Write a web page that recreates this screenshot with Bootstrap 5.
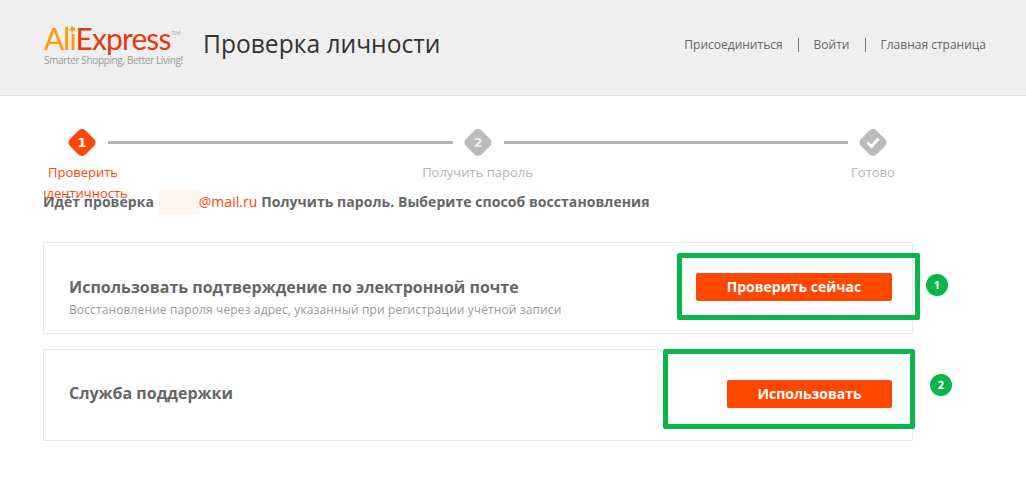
<!DOCTYPE html>
<html lang="ru">
<head>
<meta charset="utf-8">
<title>Проверка личности</title>
<link href="https://cdn.jsdelivr.net/npm/bootstrap@5.3.0/dist/css/bootstrap.min.css" rel="stylesheet">
<style>
html,body{height:496px;overflow:hidden}
body{position:relative;background:#fff;font-family:"Open Sans","Liberation Sans",sans-serif;color:#666;font-size:14px}
.top-bar{height:96px;background:#efefef;border-bottom:1px solid #e0e0e0;padding:22px 40px 0 44px}
.brand-box{width:140px;margin:-5px 19px 0 0;position:relative}
.brand-name{font-size:30px;line-height:32px;letter-spacing:-.9px;white-space:nowrap;color:#e8380d;font-family:Lato,"Open Sans",sans-serif}
.brand-ali{color:#ff9a00}
.brand-tm{font-size:6px;vertical-align:15px;color:#c9a090;letter-spacing:0;margin-left:1px}
.brand-star{position:absolute;left:24px;top:8px;display:block}
.brand-tag{font-size:10px;line-height:12px;color:#9a9a9a;white-space:nowrap;letter-spacing:-.36px;font-family:"Open Sans",sans-serif}
.page-title{font-size:24.6px;font-weight:400;color:#333;line-height:44px;margin:0}
.top-links{margin-top:16px;font-size:12px;color:#666}
.top-links span{display:block;line-height:14px}
.top-links .sep{border-left:1px solid #777;padding-left:15px;margin-left:15px}
.content-area{padding:32px 0 0 44px;width:913px}
.step-grid{display:grid;grid-template-columns:76px 1fr 76px 1fr 76px;width:867px;height:61px;overflow-x:clip;overflow-y:visible;align-content:start}
.gem{justify-self:center;display:block}
.rail{height:3px;background:#b3b3b3;margin:13px -13px 0 -12px}
.step-label{grid-row:2;justify-self:center;width:120px;text-align:center;line-height:21px;margin-top:5px;color:#b5b5b5;font-size:13px}
.step-label.on{color:#ff4700;grid-column:1;margin-left:2px}
.verify-line{font-weight:700;font-size:14px;line-height:25px;color:#666;margin:0 0 28px -1px;position:relative;white-space:nowrap;letter-spacing:.06px}
.hidden-mail{display:inline-block;width:41px;height:25px;background:#fff5ef;vertical-align:top;margin:0 -1px 0 1px}
.mail-end{color:#ff4700;font-weight:400;position:relative}
.way-box{width:870px;height:92px;border:1px solid #e8e8e8;margin:0 0 15px -1px;padding:0 20px 0 25px}
.way-title{font-size:16px;font-weight:700;color:#666;line-height:24px}
.way-text{margin-top:18px}
.way-sub{font-size:12px;line-height:18px;color:#999;margin-top:2px;letter-spacing:.12px}
.way-solo{margin-bottom:4px}
.way-btn{background:#ff4700;border:0;border-radius:2px;height:28px;color:#fff;font-weight:700;font-size:14px;padding:0;line-height:28px;margin-bottom:2px}
.way-btn:hover{background:#ff4700;color:#fff}
.btn-a{width:196px}
.btn-b{width:165px}
.mark-frame{position:absolute;border:5px solid #07b74c;border-radius:2px}
.frame-a{left:677px;top:253px;width:243px;height:67px}
.frame-b{left:663px;top:349px;width:252px;height:80px}
.mark-dot{position:absolute;width:22px;height:22px;border-radius:50%;background:#07b74c;color:#fff;font-size:11px;font-weight:700;line-height:22px;text-align:center}
.dot-a{left:926px;top:274px}
.dot-b{left:930px;top:374px}
</style>
</head>
<body>
<header class="top-bar d-flex align-items-start">
  <div class="brand-box">
    <svg class="brand-star" width="8" height="9" viewBox="0 0 8 10"><path d="M4 0 5 4 8 5 5 6 4 10 3 6 0 5 3 4Z" fill="#ff9a00"/></svg>
    <div class="brand-name"><span class="brand-ali">Ali</span>Express<span class="brand-tm">TM</span></div>
    <div class="brand-tag">Smarter Shopping, Better Living!</div>
  </div>
  <h1 class="page-title">Проверка личности</h1>
  <nav class="top-links ms-auto d-flex">
    <span>Присоединиться</span><span class="sep">Войти</span><span class="sep">Главная страница</span>
  </nav>
</header>
<main class="content-area">
  <div class="step-grid">
    <svg class="gem" width="30" height="29" viewBox="0 0 30 29"><rect x="4" y="3.5" width="22" height="22" rx="5" fill="#ff4700" transform="rotate(45 15 14.5)"/><text x="15" y="19" text-anchor="middle" font-family="DejaVu Sans" font-weight="700" font-size="13" fill="#fff">1</text></svg>
    <div class="rail"></div>
    <svg class="gem" width="30" height="29" viewBox="0 0 30 29"><rect x="4" y="3.5" width="22" height="22" rx="5" fill="#bbb" transform="rotate(45 15 14.5)"/><text x="15" y="19" text-anchor="middle" font-family="DejaVu Sans" font-weight="700" font-size="13" fill="#eee">2</text></svg>
    <div class="rail"></div>
    <svg class="gem" width="30" height="29" viewBox="0 0 30 29"><rect x="4" y="3.5" width="22" height="22" rx="5" fill="#bbb" transform="rotate(45 15 14.5)"/><path d="M9.5 14.5 13.5 18.5 20.5 10.5" fill="none" stroke="#fff" stroke-width="3"/></svg>
    <div class="step-label on">Проверить идентичность</div>
    <div class="step-label" style="grid-column:3">Получить пароль</div>
    <div class="step-label" style="grid-column:5">Готово</div>
  </div>
  <p class="verify-line">Идёт проверка <span class="hidden-mail"></span><span class="mail-end">@mail.ru</span> Получить пароль. Выберите способ восстановления</p>
  <section class="way-box d-flex align-items-center justify-content-between">
    <div class="way-text">
      <div class="way-title">Использовать подтверждение по электронной почте</div>
      <div class="way-sub">Восстановление пароля через адрес, указанный при регистрации учётной записи</div>
    </div>
    <button type="button" class="btn way-btn btn-a">Проверить сейчас</button>
  </section>
  <section class="way-box d-flex align-items-center justify-content-between">
    <div class="way-title way-solo">Служба поддержки</div>
    <button type="button" class="btn way-btn btn-b">Использовать</button>
  </section>
</main>
<div class="mark-frame frame-a"></div>
<div class="mark-frame frame-b"></div>
<div class="mark-dot dot-a">1</div>
<div class="mark-dot dot-b">2</div>
</body>
</html>
